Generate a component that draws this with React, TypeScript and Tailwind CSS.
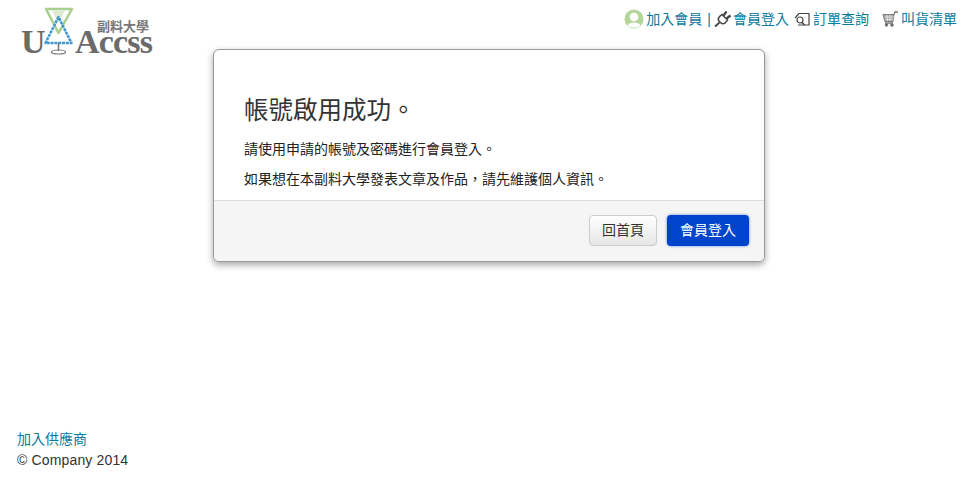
const font = { fontFamily: '"Liberation Sans", "Noto Sans CJK TC", sans-serif' };

function Logo() {
  return (
    <div className="relative h-[60px] w-[140px]">
      <svg className="absolute left-[22px] top-[6px]" width="60" height="50" viewBox="0 0 60 50" fill="none">
        <path d="M24 3h26L36.500 27z" stroke="#a9cf8f" strokeWidth="2.500" strokeLinejoin="round" />
        <path d="M30 4.500h13L36.500 17z" fill="#dcebcf" />
        <path d="M36.500 11L23.500 37h26z" stroke="#3f97d0" strokeWidth="2.500" strokeDasharray="3 0.800" strokeLinejoin="round" />
        <path d="M36.500 37v8" stroke="#777" strokeWidth="1.500" />
        <ellipse cx="36.500" cy="46" rx="7" ry="2" stroke="#777" strokeWidth="1.200" />
      </svg>
      <span className="absolute left-[21px] top-[33px] font-['Liberation_Serif',serif] text-[34px] font-bold leading-[18px] text-[#6b6b6b]">U</span>
      <span className="absolute left-[75px] top-[33px] whitespace-nowrap font-['Liberation_Serif',serif] text-[34px] font-bold leading-[18px] tracking-[-0.8px] text-[#6b6b6b]">Accss</span>
      <span className="absolute left-[97px] top-[21px] whitespace-nowrap text-[13px] font-bold leading-[12px] text-[#777]">副料大學</span>
    </div>
  );
}

function UserIcon() {
  return (
    <svg width="20" height="20" viewBox="0 0 20 20">
      <circle cx="10" cy="10" r="9.500" fill="#b5d69b" />
      <circle cx="10" cy="8" r="4.300" fill="#fff" />
      <path d="M3.500 16.500C5 12.500 15 12.500 16.500 16.500 13 19.500 7 19.500 3.500 16.500z" fill="#fff" />
    </svg>
  );
}

function PlugIcon() {
  return (
    <svg width="18" height="18" viewBox="0 0 18 18" fill="none" stroke="#444" strokeWidth="1.500">
      <path d="M8 4.500l5.500 5.500-2.200 2.800c-1.600 1.200-3.400 1.200-4.600 0l-1.500-1.500c-1.200-1.300-1.200-3 0-4.400z" fill="#fff" />
      <path d="M9.500 5.500l3-4M12.500 8.500l4-3" strokeWidth="2.200" />
      <path d="M5.500 12.500L1 16.500" strokeWidth="1.800" />
    </svg>
  );
}

function SearchDocIcon() {
  return (
    <svg width="16" height="14" viewBox="0 0 16 14" fill="none" stroke="#444" strokeWidth="1.200">
      <path d="M5 1.500h10v11.500H4" />
      <path d="M5 1.500L1 6" />
      <circle cx="6" cy="8" r="3" />
      <path d="M8 10.500l2.500 2.500" strokeWidth="1.600" />
    </svg>
  );
}

function CartIcon() {
  return (
    <svg width="17" height="16" viewBox="0 0 17 16" fill="none" stroke="#777">
      <path d="M1 3.500h11l-1 7H3z" fill="#aaa" />
      <path d="M3 6h9M3.500 8.500h8M5 3.500l.5 7M8 3.500v7" stroke="#eee" strokeWidth="0.700" />
      <path d="M12 3.500l1-2.500h3M3 12h8" strokeWidth="1.300" />
      <circle cx="4.500" cy="14" r="1.300" fill="#666" />
      <circle cx="10" cy="14" r="1.300" fill="#666" />
    </svg>
  );
}

export default function App() {
  return (
    <div className="flex h-[491px] w-[975px] flex-col overflow-hidden bg-white text-[14px] text-[#333]" style={font}>
      <header className="flex h-[49px] items-start justify-between">
        <Logo />
        <nav className="mr-[18px] mt-[9px] flex items-center text-[14px] leading-5 text-[#0b7a9e]">
          <UserIcon />
          <a className="ml-[2px]">加入會員</a>
          <span className="ml-[5px]">|</span>
          <span className="ml-[3px]"><PlugIcon /></span>
          <a className="ml-[1px]">會員登入</a>
          <span className="ml-[5px]"><SearchDocIcon /></span>
          <a className="ml-[3px]">訂單查詢</a>
          <span className="ml-[13px]"><CartIcon /></span>
          <a className="ml-[2px]">叫貨清單</a>
        </nav>
      </header>

      <main className="ml-[213px] w-[552px] overflow-hidden rounded-[6px] border border-[#999] bg-white shadow-[0_3px_7px_rgba(0,0,0,0.35)]">
        <div className="h-[150px] pl-[30px] pr-[31px] pt-[43px]">
          <h3 className="text-[24.500px] font-normal leading-[36px] text-[#333]">帳號啟用成功。</h3>
          <p className="mt-[10px] text-[14px] leading-5 text-[#222]">請使用申請的帳號及密碼進行會員登入。</p>
          <p className="mt-[10px] text-[14px] leading-5 text-[#222]">如果想在本副料大學發表文章及作品，請先維護個人資訊。</p>
        </div>
        <div className="flex h-[61px] items-center justify-end gap-[10px] border-t border-[#ddd] bg-[#f5f5f5] pb-[2px] pr-[15px]">
          <button className="h-[31px] w-[68px] rounded-[4px] border border-[#ccc] bg-gradient-to-b from-white to-[#e6e6e6] text-[14px] text-[#333] shadow-[inset_0_1px_0_rgba(255,255,255,0.2)]">回首頁</button>
          <button className="h-[31px] w-[82px] rounded-[4px] bg-[#0044cc] text-[14px] text-white shadow-[0_0_3px_rgba(0,68,204,0.6)]">會員登入</button>
        </div>
      </main>

      <footer className="mt-[167px] pl-[17px] text-[14px] leading-[21px]">
        <a className="block text-[#0b7a9e]">加入供應商</a>
        <p className="tracking-[0.15px] text-[#333]">© Company 2014</p>
      </footer>
    </div>
  );
}
